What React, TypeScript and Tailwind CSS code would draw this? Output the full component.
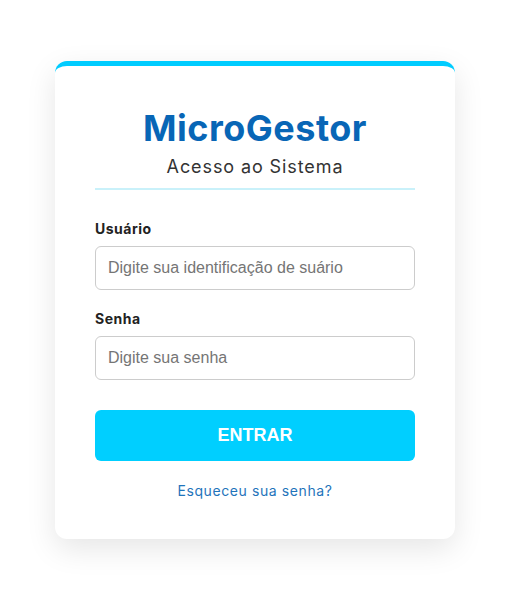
import React from 'react';

export default function App() {
  return (
    <div className="min-h-screen bg-white pt-[61px] font-['Inter',sans-serif]">
      <main className="ml-[55px] w-[400px] rounded-xl border-t-[5px] border-[#00ccff] bg-white px-10 pb-[37px] pt-[40px] shadow-[0_10px_30px_rgba(0,0,0,0.1)]">
        <header className="border-b-2 border-[#c9f1fa] pb-2 text-center">
          <h1 className="text-[36px] font-bold leading-[44px] tracking-[0.5px] text-[#0866b6]">MicroGestor</h1>
          <p className="mt-[4px] text-[18px] leading-[26px] tracking-[0.9px] text-[#333333]">Acesso ao Sistema</p>
        </header>

        <form className="mt-[29px]" onSubmit={(e) => e.preventDefault()}>
          <label htmlFor="usuario" className="mb-[7px] block text-[14px] font-bold leading-[20px] tracking-[0.5px] text-[#222222]">
            Usuário
          </label>
          <input
            id="usuario"
            type="text"
            placeholder="Digite sua identificação de suário"
            className="block h-[44px] w-full rounded-md border border-[#cccccc] px-3 font-['Liberation_Sans',sans-serif] text-[16px] text-[#333] placeholder:text-[#757575] outline-none"
          />

          <label htmlFor="senha" className="mb-[7px] mt-[19px] block text-[14px] font-bold leading-[20px] tracking-[0.5px] text-[#222222]">
            Senha
          </label>
          <input
            id="senha"
            type="password"
            placeholder="Digite sua senha"
            className="block h-[44px] w-full rounded-md border border-[#cccccc] px-3 font-['Liberation_Sans',sans-serif] text-[16px] text-[#333] placeholder:text-[#757575] outline-none"
          />

          <button
            type="submit"
            className="mt-[30px] block h-[51px] w-full rounded-md bg-[#00cfff] font-['Liberation_Sans',sans-serif] text-[18px] font-bold text-white"
          >
            ENTRAR
          </button>
        </form>

        <div className="mt-[17px] text-center">
          <a href="#" className="text-[14px] leading-[20px] tracking-[0.6px] text-[#1f74bb]">
            Esqueceu sua senha?
          </a>
        </div>
      </main>
    </div>
  );
}
